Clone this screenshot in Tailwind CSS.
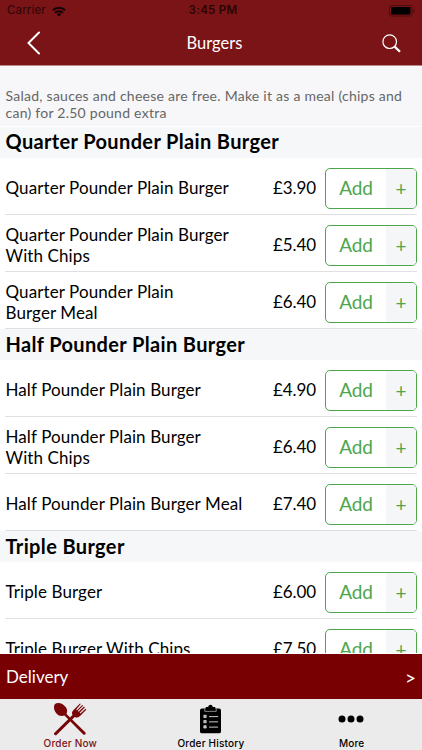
<!doctype html>
<html lang="en">
<head>
    <meta charset="UTF-8">
    <meta name="viewport" content="width=device-width, initial-scale=1.0">
    <title>Burgers</title>
    <script src="https://cdn.jsdelivr.net/npm/@tailwindcss/browser@4"></script>
</head>
<body class="bg-white">
    <div class="flex flex-col w-[422px] h-[750px] overflow-hidden font-['Lato',sans-serif] text-black">
        <!-- Status bar and navigation -->
        <header class="flex-none h-[66px] bg-[#7a1416] border-b border-[#b98a8c]">
            <div class="grid grid-cols-3 items-center h-[22px] px-[7px] font-['Inter',sans-serif] text-[11.5px]">
                <div class="flex items-center gap-[6px] text-[#2a0505]">
                    <span class="tracking-[0.15px]">Carrier</span>
                    <svg class="w-[14px] h-[11px]" viewBox="0 0 15 11" fill="none" stroke="#120202" stroke-width="2.3">
                        <path d="M1 4.2a9.2 9.2 0 0 1 13 0M3.3 6.9a6 6 0 0 1 8.4 0"/>
                        <path d="M7.5 10.8 5.2 8.6a3.3 3.3 0 0 1 4.6 0z" fill="#120202" stroke="none"/>
                    </svg>
                </div>
                <div class="text-center font-semibold text-[#2a0505] tracking-[0.3px] pl-1">3:45 PM</div>
                <div class="flex justify-end">
                    <svg class="w-[26px] h-[12px]" viewBox="0 0 26 12">
                        <rect x=".5" y=".5" width="22.5" height="10.5" rx="2" fill="none" stroke="#4c0b0d"/>
                        <rect x="2" y="2" width="19.5" height="7.5" rx="1" fill="#000"/>
                        <path d="M24.3 4v4q1.4-.6 1.4-2t-1.4-2" fill="#4c0b0d"/>
                    </svg>
                </div>
            </div>
            <div class="grid grid-cols-3 items-center h-[42px] text-white">
                <svg class="w-[14px] h-[24px] ml-[27px]" viewBox="0 0 14 24" fill="none" stroke="currentColor" stroke-width="2" stroke-linecap="round">
                    <path d="M12 1.5 1.5 12 12 22.5"/>
                </svg>
                <h1 class="text-center text-[16.5px] pl-[7px]">Burgers</h1>
                <svg class="w-[19px] h-[19px] justify-self-end mr-[21px]" viewBox="0 0 19 19" fill="none" stroke="currentColor">
                    <circle cx="7.7" cy="7.7" r="6.8" stroke-width="1.2"/>
                    <path d="m12.6 12.6 5.4 5.2" stroke-width="2.2"/>
                </svg>
            </div>
        </header>

        <!-- Menu list -->
        <main class="flex-1 min-h-0 overflow-hidden border-b border-white text-[17px] leading-[20.5px] tracking-[0.1px] whitespace-nowrap">
            <p class="h-[61px] pt-[22px] pl-[5.5px] bg-[#f7f7f9] border-b border-white text-[14px] leading-[16.5px] tracking-[0.25px] text-[#666]">Salad, sauces and cheese are free. Make it as a meal (chips and<br>can) for 2.50 pound extra</p>

            <h2 class="h-[31px] pl-[5.5px] bg-[#f6f7f9] text-[20px] leading-[29px] tracking-[0.36px] font-bold">Quarter Pounder Plain Burger</h2>
            <ul class="px-[5px]">
                <li class="flex items-center h-[57px] border-b border-[#e0e0e4]">
                    <span class="flex-1 pt-[5px] pl-[0.5px]">Quarter Pounder Plain Burger</span>
                    <span class="pt-[5px] mr-[9px] tracking-[-0.1px]">£3.90</span>
                    <button class="flex w-[92px] h-[41px] mt-[5px] border border-[#4ca64c] rounded-[5px] overflow-hidden text-[#4ca64c]"><span class="flex-1 text-[19px] leading-[38px] tracking-[-0.2px]">Add</span><span class="w-[30px] bg-[#f5f6f8] text-[19px] leading-[40px]">+</span></button>
                </li>
                <li class="flex items-center h-[57px] border-b border-[#e0e0e4]">
                    <span class="flex-1 pt-[5px] pl-[0.5px]">Quarter Pounder Plain Burger<br>With Chips</span>
                    <span class="pt-[5px] mr-[9px] tracking-[-0.1px]">£5.40</span>
                    <button class="flex w-[92px] h-[41px] mt-[5px] border border-[#4ca64c] rounded-[5px] overflow-hidden text-[#4ca64c]"><span class="flex-1 text-[19px] leading-[38px] tracking-[-0.2px]">Add</span><span class="w-[30px] bg-[#f5f6f8] text-[19px] leading-[40px]">+</span></button>
                </li>
                <li class="flex items-center h-[57px] border-b border-[#e0e0e4]">
                    <span class="flex-1 pt-[5px] pl-[0.5px]">Quarter Pounder Plain<br>Burger Meal</span>
                    <span class="pt-[5px] mr-[9px] tracking-[-0.1px]">£6.40</span>
                    <button class="flex w-[92px] h-[41px] mt-[5px] border border-[#4ca64c] rounded-[5px] overflow-hidden text-[#4ca64c]"><span class="flex-1 text-[19px] leading-[38px] tracking-[-0.2px]">Add</span><span class="w-[30px] bg-[#f5f6f8] text-[19px] leading-[40px]">+</span></button>
                </li>
            </ul>

            <h2 class="h-[31px] pl-[5.5px] bg-[#f6f7f9] text-[20px] leading-[30px] tracking-[0.36px] font-bold">Half Pounder Plain Burger</h2>
            <ul class="px-[5px]">
                <li class="flex items-center h-[57px] border-b border-[#e0e0e4]">
                    <span class="flex-1 pt-[5px] pl-[0.5px]">Half Pounder Plain Burger</span>
                    <span class="pt-[5px] mr-[9px] tracking-[-0.1px]">£4.90</span>
                    <button class="flex w-[92px] h-[41px] mt-[5px] border border-[#4ca64c] rounded-[5px] overflow-hidden text-[#4ca64c]"><span class="flex-1 text-[19px] leading-[38px] tracking-[-0.2px]">Add</span><span class="w-[30px] bg-[#f5f6f8] text-[19px] leading-[40px]">+</span></button>
                </li>
                <li class="flex items-center h-[57px] border-b border-[#e0e0e4]">
                    <span class="flex-1 pt-[5px] pl-[0.5px]">Half Pounder Plain Burger<br>With Chips</span>
                    <span class="pt-[5px] mr-[9px] tracking-[-0.1px]">£6.40</span>
                    <button class="flex w-[92px] h-[41px] mt-[5px] border border-[#4ca64c] rounded-[5px] overflow-hidden text-[#4ca64c]"><span class="flex-1 text-[19px] leading-[38px] tracking-[-0.2px]">Add</span><span class="w-[30px] bg-[#f5f6f8] text-[19px] leading-[40px]">+</span></button>
                </li>
                <li class="flex items-center h-[57px] border-b border-[#e0e0e4]">
                    <span class="flex-1 pt-[5px] pl-[0.5px]">Half Pounder Plain Burger Meal</span>
                    <span class="pt-[5px] mr-[9px] tracking-[-0.1px]">£7.40</span>
                    <button class="flex w-[92px] h-[41px] mt-[5px] border border-[#4ca64c] rounded-[5px] overflow-hidden text-[#4ca64c]"><span class="flex-1 text-[19px] leading-[38px] tracking-[-0.2px]">Add</span><span class="w-[30px] bg-[#f5f6f8] text-[19px] leading-[40px]">+</span></button>
                </li>
            </ul>

            <h2 class="h-[31px] pl-[5.5px] bg-[#f6f7f9] text-[20px] leading-[30px] tracking-[0.36px] font-bold">Triple Burger</h2>
            <ul class="px-[5px]">
                <li class="flex items-center h-[57px] border-b border-[#e0e0e4]">
                    <span class="flex-1 pt-[5px] pl-[0.5px]">Triple Burger</span>
                    <span class="pt-[5px] mr-[9px] tracking-[-0.1px]">£6.00</span>
                    <button class="flex w-[92px] h-[41px] mt-[5px] border border-[#4ca64c] rounded-[5px] overflow-hidden text-[#4ca64c]"><span class="flex-1 text-[19px] leading-[38px] tracking-[-0.2px]">Add</span><span class="w-[30px] bg-[#f5f6f8] text-[19px] leading-[40px]">+</span></button>
                </li>
                <li class="flex items-center h-[57px] border-b border-[#e0e0e4]">
                    <span class="flex-1 pt-[5px] pl-[0.5px]">Triple Burger With Chips</span>
                    <span class="pt-[5px] mr-[9px] tracking-[-0.1px]">£7.50</span>
                    <button class="flex w-[92px] h-[41px] mt-[5px] border border-[#4ca64c] rounded-[5px] overflow-hidden text-[#4ca64c]"><span class="flex-1 text-[19px] leading-[38px] tracking-[-0.2px]">Add</span><span class="w-[30px] bg-[#f5f6f8] text-[19px] leading-[40px]">+</span></button>
                </li>
            </ul>
        </main>

        <!-- Delivery bar -->
        <div class="flex-none flex items-center justify-between h-[45px] px-[6px] bg-[#780002] text-white text-[17px]">
            <span>Delivery</span>
            <span class="text-[19px] pt-[3px]">&gt;</span>
        </div>

        <!-- Tabs -->
        <nav class="flex-none grid grid-cols-3 h-[51px] bg-[#ebebeb] font-['Inter',sans-serif] text-[10px] leading-[14px] tracking-[0.2px] font-medium text-center">
            <a class="flex flex-col items-center text-[#7a1416]">
                <svg class="w-[34px] h-[34px] mt-[3px]" viewBox="0 0 34 34" fill="#780508">
                    <path d="M2 2C5-.3 10 1.5 12.7 5c1.8 2.5 1.6 5 .8 7L32.500 30.500q.6 1.300-.5 2-1 .6-2-.3L11.500 13.500C8.500 14.500 5.500 14 3.500 11.500 1 8.500 0 4.500 2 2z"/>
                    <path d="M1.200 31 19.500 13C18.500 11 19 9.500 20.500 8L27 1.500l.8.6-4.600 5.400.8.7L29.200 3l.8.700-5.200 5.200.8.8L31 4.600l.8.8-5.200 5.300.8.700 5.200-4.600.7.9L27 14c-1.700 1.600-3.500 2-5.300 1L3.500 33q-1 .7-2-.2-.9-.9-.3-1.800z"/>
                </svg>
                <span>Order Now</span>
            </a>
            <a class="flex flex-col items-center">
                <svg class="w-[21px] h-[30px] mt-[5px] mb-[2px] mr-[1px]" viewBox="0 0 22 30">
                    <path d="M2 4h4V2.500h2.500Q9 0 11 0t2.500 2.500H16V4h4q2 0 2 2v22q0 2-2 2H2q-2 0-2-2V6q0-2 2-2z" fill="#000"/>
                    <path d="M5 4.500v2.500h12V4.500" fill="none" stroke="#ebebeb" stroke-width=".6"/>
                    <path d="M4 11h2.500v2.500H4zM4 16.500h2.500v2.500H4zM4 22h2.500v2.500H4z" fill="#aaa" stroke="#ebebeb" stroke-width=".7"/>
                    <path d="M9.500 12.500H19M9.500 18H19M9.500 23.500H19" fill="none" stroke="#ebebeb" stroke-width=".9"/>
                </svg>
                <span>Order History</span>
            </a>
            <a class="flex flex-col items-center">
                <svg class="w-[26px] h-[8px] mt-[16px] mb-[13px] mr-[1px]" viewBox="0 0 26 8">
                    <circle cx="4" cy="4" r="3.5"/>
                    <circle cx="13" cy="4" r="3.5"/>
                    <circle cx="22" cy="4" r="3.5"/>
                </svg>
                <span>More</span>
            </a>
        </nav>
    </div>
</body>
</html>
